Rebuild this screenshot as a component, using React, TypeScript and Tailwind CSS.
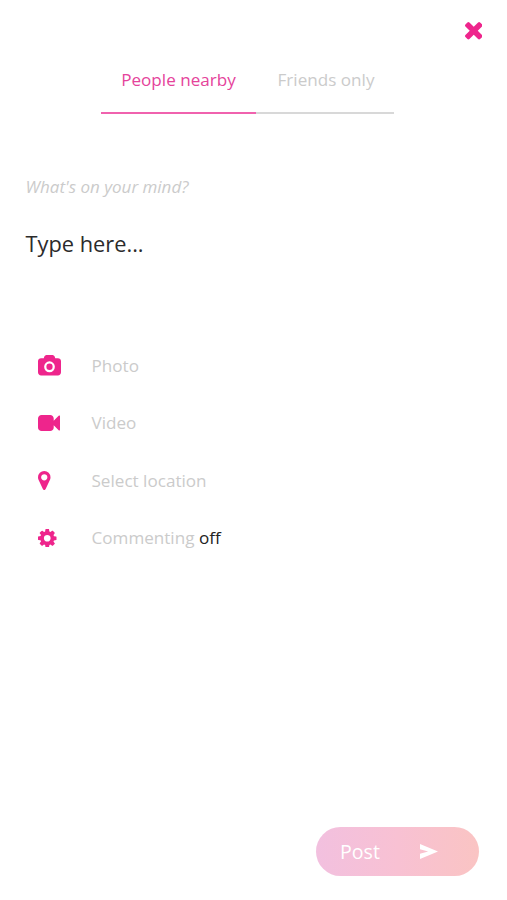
import { useState } from "react";

type IconProps = {
  viewBox: string;
  path: string;
  className: string;
};

const Icon = ({ viewBox, path, className }: IconProps) => (
  <svg
    xmlns="http://www.w3.org/2000/svg"
    viewBox={viewBox}
    preserveAspectRatio="none"
    fill="currentColor"
    className={className}
  >
    <path d={path} />
  </svg>
);

const closePath =
  "M1490 1322q0 40-28 68l-136 136q-28 28-68 28t-68-28l-294-294-294 294q-28 28-68 28t-68-28l-136-136q-28-28-28-68t28-68l294-294-294-294q-28-28-28-68t28-68l136-136q28-28 68-28t68 28l294 294 294-294q28-28 68-28t68 28l136 136q28 28 28 68t-28 68l-294 294 294 294q28 28 28 68z";

const options = [
  {
    label: "Photo",
    viewBox: "0 0 1920 1664",
    className: "h-[20.5px] w-[23px]",
    path: "M960 700a260 260 0 0 1 0 520 260 260 0 0 1 0-520zm704-444q106 0 181 75t75 181v896q0 106-75 181t-181 75h-1408q-106 0-181-75t-75-181v-896q0-106 75-181t181-75h224l51-136q19-49 69.5-84.5t103.5-35.5h512q53 0 103.5 35.5t69.5 84.5l51 136h224zm-704 1152q185 0 316.5-131.5t131.5-316.5-131.5-316.5-316.5-131.5-316.5 131.5-131.5 316.5 131.5 316.5 316.5 131.5z",
  },
  {
    label: "Video",
    viewBox: "0 256 1792 1280",
    className: "h-[16px] w-[22px]",
    path: "M1792 352v1088q0 42-39 59-13 5-25 5-27 0-45-19l-403-403v166q0 119-84.5 203.5t-203.5 84.5h-704q-119 0-203.5-84.5t-84.5-203.5v-704q0-119 84.5-203.5t203.5-84.5h704q119 0 203.5 84.5t84.5 203.5v165l403-402q18-19 45-19 12 0 25 5 39 17 39 59z",
  },
  {
    label: "Select location",
    viewBox: "384 128 1024 1536",
    className: "h-[19px] w-[12.5px]",
    path: "M1152 640q0-106-75-181t-181-75-181 75-75 181 75 181 181 75 181-75 75-181zm256 0q0 109-33 179l-364 774q-16 33-47.5 52t-67.5 19-67.5-19-46.5-52l-365-774q-33-70-33-179 0-212 150-362t362-150 362 150 150 362z",
  },
  {
    label: "Commenting",
    value: "off",
    viewBox: "128 128 1536 1536",
    className: "size-[18.5px]",
    path: "M1176 896q0-116-82-198t-198-82-198 82-82 198 82 198 198 82 198-82 82-198zm488-109v222q0 12-8 23t-20 13l-185 28q-19 54-39 91 35 50 107 138 10 12 10 25t-9 23q-27 37-99 108t-94 71q-12 0-26-9l-138-108q-44 23-91 38-16 136-29 186-7 28-36 28h-222q-14 0-24.5-8.5t-11.5-21.5l-28-184q-49-16-90-37l-141 107q-10 9-25 9-14 0-25-11-126-114-165-168-7-10-7-23 0-12 8-23 15-21 51-66.5t54-70.5q-27-50-41-99l-183-27q-13-2-21-12.5t-8-23.5v-222q0-12 8-23t19-13l186-28q14-46 39-92-40-57-107-138-10-12-10-24 0-10 9-23 26-36 98.5-107.5t94.5-71.5q13 0 26 10l138 107q44-23 91-38 16-136 29-186 7-28 36-28h222q14 0 24.5 8.5t11.5 21.5l28 184q49 16 90 37l142-107q9-9 24-9 13 0 25 10 129 119 165 170 7 8 7 22 0 12-8 23-15 21-51 66.5t-54 70.5q26 50 41 98l183 28q13 2 21 12.5t8 23.5z",
  },
];

const tabs = [
  { label: "People nearby", className: "w-[155px]" },
  { label: "Friends only", className: "w-[138px] pl-[2px]" },
];

const App = () => {
  const [activeTab, setActiveTab] = useState("People nearby");

  return (
    <main className="flex h-[900px] w-[507px] flex-col bg-white font-['Open_Sans','Noto_Sans',sans-serif] text-[17.1px]">
      <header className="flex h-[60px] justify-end pt-[22px] pr-[25px]">
        <button aria-label="Close" className="h-[18px] text-[#ee258c]">
          <Icon
            viewBox="302 366 1188 1188"
            path={closePath}
            className="size-[17.5px]"
          />
        </button>
      </header>

      <nav className="ml-[101px] flex">
        {tabs.map((tab) => (
          <button
            key={tab.label}
            onClick={() => setActiveTab(tab.label)}
            className={`h-[54px] border-b-2 pb-[12px] whitespace-nowrap ${tab.className} ${
              activeTab === tab.label
                ? "border-[#f062ae] text-[#e5439b]"
                : "border-[#d8d8d8] text-[#cbcbcb]"
            }`}
          >
            {tab.label}
          </button>
        ))}
      </nav>

      <section className="pt-[61px] pl-[25.5px]">
        <p className="h-[24px] text-[17px] leading-[24px] text-[#cbcbcb] italic">
          What's on your mind?
        </p>
        <p className="mt-[30px] text-[21.8px] leading-[30px] text-[#2b2b2b]">
          Type here...
        </p>
      </section>

      <ul className="pt-[78px] pl-[38px]">
        {options.map((option) => (
          <li key={option.label} className="flex h-[57.4px] items-center">
            <span className="w-[53.5px] text-[#ee258c]">
              <Icon
                viewBox={option.viewBox}
                path={option.path}
                className={option.className}
              />
            </span>
            <span className="text-[#cbcbcb]">
              {option.label}
              {option.value && (
                <span className="text-[#222222]"> {option.value}</span>
              )}
            </span>
          </li>
        ))}
      </ul>

      <footer className="mt-auto mr-[28px] mb-[24px] flex justify-end">
        <button className="flex h-[49px] w-[163px] items-center rounded-full bg-linear-to-r from-[#f2c0df] via-[#f8c1d3] to-[#fac4c3] pl-[24px] text-[19.6px] font-medium text-white">
          Post
          <Icon
            viewBox="2 3 21 18"
            path="M2 3 23 12 2 21V14.6L11.5 12 2 9.4z"
            className="ml-[40.5px] h-[15px] w-[18px]"
          />
        </button>
      </footer>
    </main>
  );
};

export default App;
